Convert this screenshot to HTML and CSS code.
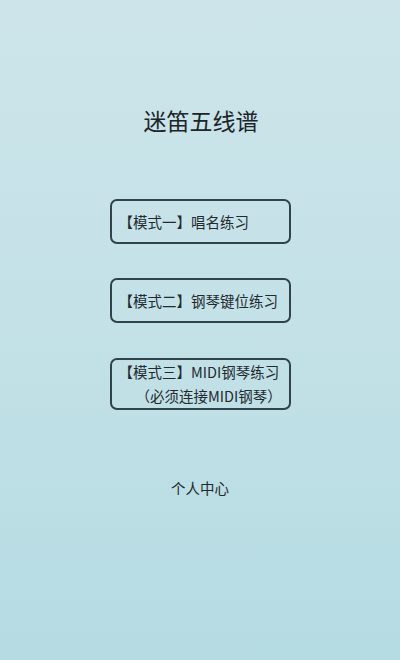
FILE: index.html
```html
<!DOCTYPE html>
<html lang="zh-CN">
<head>
<meta charset="utf-8">
<title>迷笛五线谱</title>
<link rel="stylesheet" href="styles.css">
</head>
<body>
<main class="screen">
  <h1 class="title">迷笛五线谱</h1>
  <div class="mode mode-1"><span class="line"><span class="punct">【</span>模式一<span class="punct">】</span>唱名练习</span></div>
  <div class="mode mode-2"><span class="line"><span class="punct">【</span>模式二<span class="punct">】</span>钢琴键位练习</span></div>
  <div class="mode mode-3">
    <span class="line"><span class="punct">【</span>模式三<span class="punct">】</span>MIDI钢琴练习</span>
    <span class="line line-sub"><span class="punct">（</span>必须连接MIDI钢琴<span class="punct">）</span></span>
  </div>
  <div class="personal">个人中心</div>
</main>
</body>
</html>
```

FILE: styles.css
```css
html, body {
  margin: 0;
  padding: 0;
}

body {
  width: 400px;
  height: 660px;
  overflow: hidden;
  font-family: "Noto Sans CJK SC", "Noto Sans", sans-serif;
  color: #1f2b30;
  background: linear-gradient(180deg, #cde5ea 0%, #c3e1e7 50%, #b5dbe3 100%);
}

.screen {
  height: 660px;
  display: flex;
  flex-direction: column;
  align-items: center;
  padding-top: 105px;
  box-sizing: border-box;
}

.title {
  margin: 0;
  font-size: 23px;
  line-height: 30px;
  font-weight: 400;
  color: #1c2529;
  padding-left: 2px;
}

.mode {
  width: 181px;
  box-sizing: border-box;
  border: 2px solid #30434a;
  border-radius: 7px;
  padding-left: 7px;
  font-size: 14.5px;
  color: #1f2b30;
  display: flex;
  flex-direction: column;
  justify-content: center;
}

.punct {
  font-family: "Noto Sans CJK TC", "Noto Sans CJK SC", sans-serif;
}

.mode-1 {
  margin-top: 64px;
  height: 45px;
}

.mode-2 {
  margin-top: 34px;
  height: 45px;
}

.mode-3 {
  margin-top: 35px;
  height: 52px;
  line-height: 24px;
}

.line {
  display: block;
  white-space: nowrap;
}

.line-sub {
  padding-left: 17px;
}

.personal {
  margin-top: 68px;
  font-size: 14.5px;
  line-height: 20px;
  color: #1f2b30;
}
```
